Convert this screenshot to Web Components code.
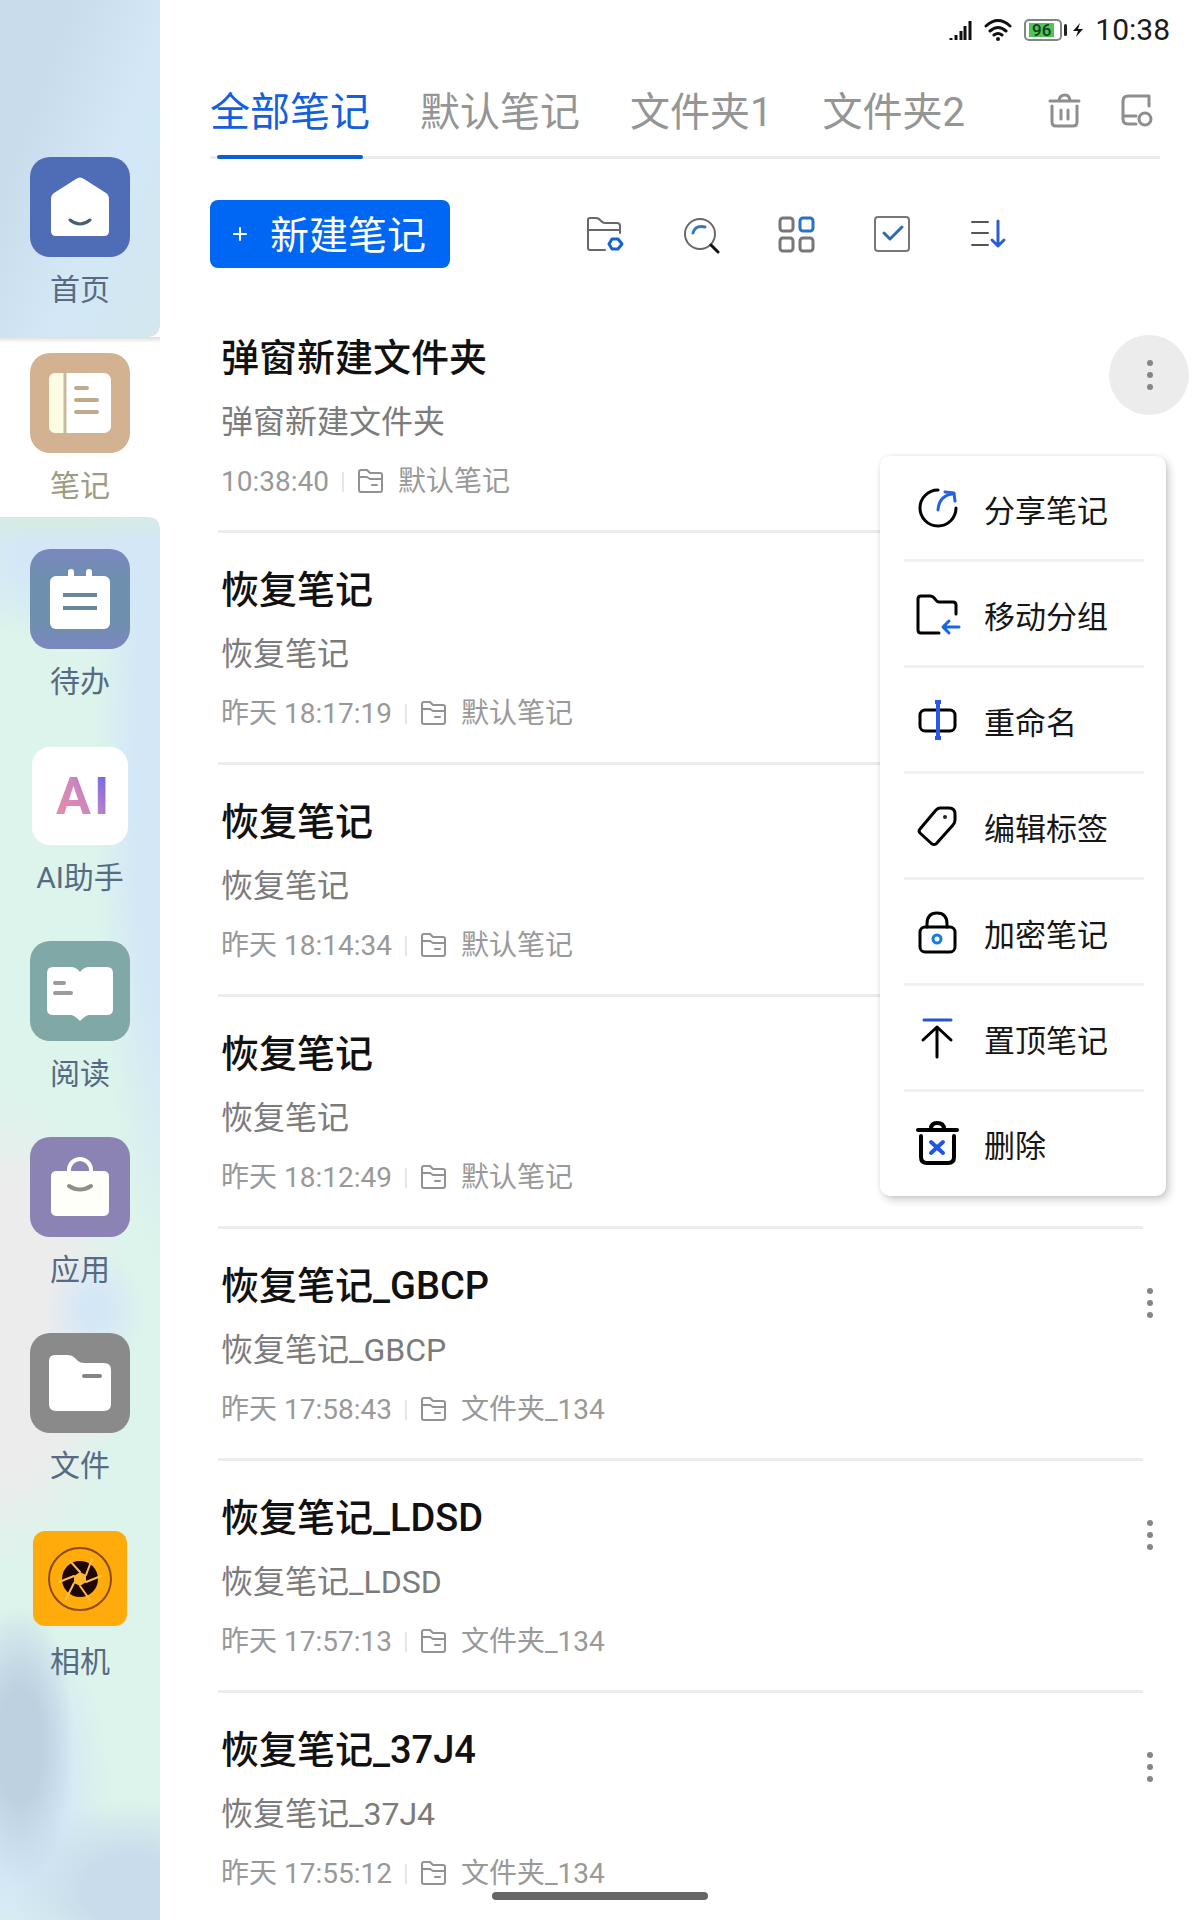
<!DOCTYPE html>
<html lang="zh-CN">
<head>
<meta charset="utf-8">
<meta name="viewport" content="width=device-width, initial-scale=1">
<title>全部笔记</title>
<style>
  html, body { margin: 0; height: 100%; }
  body { background: #fff; color: #111; font-family: Roboto, "Noto Sans CJK SC", sans-serif; overflow: hidden; }
</style>
</head>
<body>
<note-app>
  <side-bar slot="side">
    <side-item icon="home">首页</side-item>
    <side-item icon="notes" selected>笔记</side-item>
    <side-item icon="todo">待办</side-item>
    <side-item icon="ai">AI助手</side-item>
    <side-item icon="read">阅读</side-item>
    <side-item icon="apps">应用</side-item>
    <side-item icon="files">文件</side-item>
    <side-item icon="camera">相机</side-item>
  </side-bar>
  <status-bar battery="96">10:38</status-bar>
  <tab-strip>
    <tab-item active>全部笔记</tab-item>
    <tab-item>默认笔记</tab-item>
    <tab-item>文件夹1</tab-item>
    <tab-item>文件夹2</tab-item>
    <icon-button slot="tools" icon="trash" label="回收站"></icon-button>
    <icon-button slot="tools" icon="panel" label="管理"></icon-button>
  </tab-strip>
  <tool-bar>
    <new-button slot="lead">新建笔记</new-button>
    <icon-button icon="folder" label="文件夹"></icon-button>
    <icon-button icon="search" label="搜索"></icon-button>
    <icon-button icon="grid" label="视图"></icon-button>
    <icon-button icon="check" label="选择"></icon-button>
    <icon-button icon="sort" label="排序"></icon-button>
  </tool-bar>
  <note-list>
    <note-row open time="10:38:40" folder="默认笔记" summary="弹窗新建文件夹">弹窗新建文件夹
      <note-menu slot="menu">
        <menu-item icon="share">分享笔记</menu-item>
        <menu-item icon="move">移动分组</menu-item>
        <menu-item icon="rename">重命名</menu-item>
        <menu-item icon="tag">编辑标签</menu-item>
        <menu-item icon="lock">加密笔记</menu-item>
        <menu-item icon="pin">置顶笔记</menu-item>
        <menu-item icon="delete">删除</menu-item>
      </note-menu>
    </note-row>
    <note-row time="昨天 18:17:19" folder="默认笔记" summary="恢复笔记">恢复笔记</note-row>
    <note-row time="昨天 18:14:34" folder="默认笔记" summary="恢复笔记">恢复笔记</note-row>
    <note-row time="昨天 18:12:49" folder="默认笔记" summary="恢复笔记">恢复笔记</note-row>
    <note-row time="昨天 17:58:43" folder="文件夹_134" summary="恢复笔记_GBCP">恢复笔记_GBCP</note-row>
    <note-row time="昨天 17:57:13" folder="文件夹_134" summary="恢复笔记_LDSD">恢复笔记_LDSD</note-row>
    <note-row time="昨天 17:55:12" folder="文件夹_134" summary="恢复笔记_37J4">恢复笔记_37J4</note-row>
  </note-list>
</note-app>

<script>
const svg = (w, h, body) => `<svg width="${w}" height="${h}" viewBox="0 0 ${w} ${h}" fill="none" stroke-linecap="round" stroke-linejoin="round" aria-hidden="true">${body}</svg>`;
const tile = (fill, body) => svg(100, 100, `<rect width="100" height="100" rx="20" fill="${fill}"/>${body}`);

const ICONS = {
  home: tile('#4f6cb6', `<path d="M46 22Q50 19 54 22L76 36Q79 38 79 42V74Q79 79 74 79H26Q21 79 21 74V42Q21 38 24 36Z" fill="#fff"/><path d="M40 63Q50 71 60 63" stroke="#48606f" stroke-width="3"/>`),
  notes: tile('#d3b292', `<rect x="19" y="20" width="62" height="60" rx="7" fill="#fff"/><path d="M26 20H34V80H26Q19 80 19 73V27Q19 20 26 20Z" fill="#fdfde6"/><path d="M35 20V80" stroke="#c5bb9e" stroke-width="3" stroke-linecap="butt"/><path d="M46 35H57M46 47H67M46 59H67" stroke="#c0a98f" stroke-width="4"/>`),
  todo: svg(100, 100, `<defs><linearGradient id="t" x1="0" y1="0" x2="0" y2="1"><stop offset="0" stop-color="#7b87c0"/><stop offset=".3" stop-color="#6f8fae"/><stop offset=".7" stop-color="#6f8fae"/><stop offset="1" stop-color="#7b87c0"/></linearGradient></defs><rect width="100" height="100" rx="20" fill="url(#t)"/><rect x="20" y="27" width="60" height="53" rx="6" fill="#fff"/><path d="M41 23V30M59 23V30" stroke="#fff" stroke-width="6"/><path d="M33 46H67M33 59H67" stroke="#6b869b" stroke-width="4" stroke-linecap="butt"/>`),
  ai: svg(100, 100, `<defs><linearGradient id="a" gradientUnits="userSpaceOnUse" x1="26" y1="66" x2="76" y2="34"><stop offset="0" stop-color="#e58cab"/><stop offset=".5" stop-color="#cf86bd"/><stop offset="1" stop-color="#7468e6"/></linearGradient></defs><rect x="2" y="2" width="96" height="98" rx="18" fill="#fff"/><text x="26 64" y="69" font-family="Roboto" font-weight="700" font-size="52" fill="url(#a)">AI</text>`),
  read: tile('#7fa8a7', `<path d="M23 26H41Q46 26 50 31Q54 26 59 26H77Q83 26 83 32V68Q83 74 77 74H59Q56 74 50 80Q44 74 41 74H23Q17 74 17 68V32Q17 26 23 26Z" fill="#fff"/><path d="M25 42H34M25 52H41" stroke="#9b9b9b" stroke-width="4"/>`),
  apps: tile('#8b83b3', `<path d="M39 36V33A11 11 0 0 1 61 33V36" stroke="#fff" stroke-width="4"/><rect x="21" y="34" width="58" height="45" rx="5" fill="#fffffa"/><path d="M39 49Q50 56 61 49" stroke="#8f8f8a" stroke-width="4"/>`),
  files: tile('#8a8a8a', `<path d="M25 22H38Q42 22 45 25L48 28Q50 30 54 30H74Q81 30 81 37V71Q81 78 74 78H26Q19 78 19 71V28Q19 22 25 22Z" fill="#fff"/><path d="M54 43H70" stroke="#858585" stroke-width="4"/>`),
  camera: svg(100, 100, `<rect x="3" y="2" width="94" height="95" rx="12" fill="#ffab0b"/><circle cx="50" cy="50" r="31" stroke="#8c4a08" stroke-width="2"/><circle cx="50" cy="50" r="18" fill="#1d0508"/><path d="M50 43L40 32M56 46L62 30M56 53L71 47M50 57L60 71M44 54L36 70M44 47L29 53" stroke="#ffbe45" stroke-width="2"/><path d="M50 43L56 46L56 53L50 57L44 54L44 47Z" fill="#ffb82e"/>`),
  folder: svg(40, 40, `<path d="M36 19V12Q36 9 33 9H21Q19 9 17 7Q15 4 12 4H6Q4 4 4 6V34Q4 36 6 36H21M4 16H36" stroke="#686868" stroke-width="2"/><path d="M28 25H34L38 30L34 35H28L25 30Z" stroke="#1763cc" stroke-width="3"/>`),
  search: svg(40, 40, `<circle cx="20" cy="20" r="15" stroke="#686868" stroke-width="2"/><path d="M13 19Q15 11 25 13" stroke="#3279b5" stroke-width="3"/><path d="M31 31L38 38" stroke="#111" stroke-width="3"/>`),
  grid: svg(40, 40, `<g stroke="#777" stroke-width="3"><rect x="4" y="4" width="13" height="13" rx="3"/><rect x="4" y="24" width="13" height="13" rx="3"/><rect x="24" y="24" width="13" height="13" rx="3"/></g><rect x="24" y="4" width="13" height="13" rx="3" stroke="#2672c7" stroke-width="3"/>`),
  check: svg(40, 40, `<rect x="3" y="3" width="34" height="34" rx="3" stroke="#777" stroke-width="2"/><path d="M12 19L18 25L30 13" stroke="#2c6cae" stroke-width="3"/>`),
  sort: svg(40, 40, `<path d="M4 8H20M4 19H20M4 31H20" stroke="#555" stroke-width="2"/><path d="M30 7V31M24 26L30 32L36 26" stroke="#2a5fd4" stroke-width="3"/>`),
  trash: svg(40, 40, `<path d="M5 10H34M14 9Q15 4 20 4Q24 4 25 9M7 15V31Q7 35 11 35H28Q32 35 32 31V15M16 19V28M23 19V28" stroke="#8e8e8e" stroke-width="3"/>`),
  panel: svg(40, 40, `<path d="M32 15V5H11Q6 5 6 10V28Q6 33 11 33H19M7 25H19" stroke="#8e8e8e" stroke-width="3"/><circle cx="28" cy="28" r="6" stroke="#8e8e8e" stroke-width="3"/>`),
  small: svg(28, 28, `<path d="M2 22V4Q2 2 4 2H10L13 5H23Q25 5 25 7V22Q25 24 23 24H4Q2 24 2 22M2 9H10L13 11H25M15 17H20" stroke="#929292" stroke-width="2"/>`),
  share: svg(48, 48, `<path d="M25 6A18 18 0 1 0 43 24" stroke="#000" stroke-width="3"/><path d="M25 26Q26 12 39 10M32 8L41 9L42 17" stroke="#265fe2" stroke-width="3"/>`),
  move: svg(48, 48, `<path d="M43 24V15Q43 12 40 12H26Q24 12 22 9Q20 6 17 6H8Q5 6 5 9V40Q5 43 8 43H26" stroke="#000" stroke-width="3"/><path d="M46 37H31M36 31L30 37L36 43" stroke="#1467e8" stroke-width="3"/>`),
  rename: svg(48, 48, `<rect x="7" y="14" width="35" height="21" rx="5" stroke="#000" stroke-width="3"/><path d="M25 6V42M22 6H28M22 42H28" stroke="#2857ea" stroke-width="4" stroke-linecap="butt"/>`),
  tag: svg(48, 48, `<path d="M27 6H36Q42 6 42 12V18Q42 21 40 23L23 42Q21 43 19 42L7 31Q5 29 7 27L23 8Q25 6 27 6Z" stroke="#000" stroke-width="3"/><circle cx="32" cy="15" r="2" fill="#222"/>`),
  lock: svg(48, 48, `<path d="M14 19V16Q14 5 24 5Q34 5 34 16V19" stroke="#000" stroke-width="3"/><rect x="7" y="19" width="35" height="25" rx="5" stroke="#000" stroke-width="3"/><circle cx="24" cy="31" r="4" stroke="#157be6" stroke-width="3"/>`),
  pin: svg(48, 48, `<path d="M11 6H38" stroke="#2359c4" stroke-width="3"/><path d="M24 43V13M10 26L24 13L38 26" stroke="#000" stroke-width="3"/>`),
  delete: svg(48, 48, `<path d="M5 11H44M18 10Q18 4 24 4Q31 4 31 10M8 17V38Q8 44 14 44H35Q41 44 41 38V17" stroke="#000" stroke-width="4"/><path d="M18 23L30 34M30 23L18 34" stroke="#2156e4" stroke-width="4"/>`)
};

const BASE = `:host{display:block;box-sizing:border-box}*{box-sizing:border-box}svg{display:block}
button{border:0;padding:0;margin:0;background:none;font:inherit;color:inherit;cursor:pointer}`;

function define(name, render) {
  customElements.define(name, class extends HTMLElement {
    connectedCallback() {
      if (this.shadowRoot) return;
      const [css, html] = render(this);
      this.attachShadow({ mode: 'open' }).innerHTML = `<style>${BASE}${css}</style>${html}`;
    }
  });
}

define('note-app', () => [`
  :host{display:flex;height:100vh;overflow:hidden}
  aside{flex:0 0 160px}
  main{flex:1;min-width:0;display:flex;flex-direction:column}
  i{position:fixed;bottom:20px;left:50%;width:216px;height:8px;margin-left:-108px;border-radius:4px;background:#666;box-shadow:0 0 0 3px #fff}
`, `<aside><slot name="side"></slot></aside><main><slot></slot></main><i></i>`]);

define('side-bar', () => [`
  :host{height:100%;padding-top:141px;background:
    linear-gradient(110deg,#c9dcec 0 25%,#d3e7f7 60%,#d2e7ee) 0 0/160px 340px no-repeat,
    radial-gradient(55px 140px at 20px 1745px,#bed1e0 40%,#bed1e000),
    radial-gradient(120px 90px at 130px 1890px,#c9dcec 40%,#c9dcec00),
    radial-gradient(100px 180px at 10px 1790px,#d3e7f7 50%,#d3e7f700),
    radial-gradient(50px 60px at 95px 1310px,#d3e7f7 20%,#d3e7f700),
    radial-gradient(130px 240px at 0 1330px,#ececec 60%,#ececec00),
    radial-gradient(200px 30px at 60px 515px,#d6ebe4 30%,#d6ebe400),
    radial-gradient(180px 100px at 110px 550px,#d3e7f7 50%,#d3e7f700),
    radial-gradient(80px 500px at 175px 780px,#d3e7f7 50%,#d3e7f700),
    #dcf4eb}
  nav{display:flex;flex-direction:column;gap:16px}
`, `<nav><slot></slot></nav>`]);

define('side-item', el => {
  const on = el.hasAttribute('selected');
  return [`
  :host{position:relative;height:180px;padding-top:16px;${on ? 'background:linear-gradient(#dcdcdc,#fff 6px)' : ''}}
  a{display:flex;flex-direction:column;align-items:center;gap:13px;text-decoration:none;font-size:30px;line-height:40px;color:${on ? '#9d9c83' : '#566b83'}}
  ${on ? `:host::before,:host::after{content:"";position:absolute;right:0;width:10px;height:10px}
  :host::before{top:-10px;background:radial-gradient(circle at 0 0,transparent 9px,#fff 10px)}
  :host::after{bottom:-10px;background:radial-gradient(circle at 0 100%,transparent 9px,#fff 10px)}` : ''}
`, `<a href="#${el.getAttribute('icon')}"${on ? ' aria-current="page"' : ''}>${ICONS[el.getAttribute('icon')]}<span><slot></slot></span></a>`];
});

define('status-bar', el => [`
  :host{display:flex;justify-content:flex-end;align-items:center;height:60px;padding-right:30px;font-size:30px;line-height:36px;color:#1c1c1c}
  .wifi{margin:0 12px}
  .cell{width:38px;height:22px;padding:2px 6px 2px 3px;border:2px solid #7d8a7d;border-radius:5px}
  .cell b{display:block;background:#50c458;color:#123f18;font-size:17px;font-weight:500;line-height:14px;text-align:center}
  .cap{width:3px;height:12px;margin-left:2px;background:#222;border-radius:2px}
  .bolt{margin:0 11px 0 5px}
`, `${svg(24, 24, '<path d="M3 20V22M8 17V22M13 13V22M17 8V22M22 3V22" stroke="#111" stroke-width="3" stroke-linecap="butt"/>')}
  <span class="wifi">${svg(28, 24, '<path d="M2 8Q14 -3 26 8M6 13Q14 6 22 13M10 17Q14 14 18 17" stroke="#111" stroke-width="3"/><circle cx="14" cy="21" r="2" fill="#111"/>')}</span>
  <div class="cell"><b>${el.getAttribute('battery')}</b></div><div class="cap"></div>
  <span class="bolt">${svg(12, 14, '<path d="M8 0L1 8H6L4 14L11 6H6Z" fill="#111"/>')}</span><time><slot></slot></time>`]);

define('tab-strip', () => [`
  :host{padding:0 40px 0 50px}
  .row{display:flex;height:99px;border-bottom:3px solid #ececec}
  nav{display:flex;gap:50px;flex:1}
  .tools{display:flex;gap:32px;padding-top:31px;padding-right:3px}
`, `<div class="row"><nav><slot></slot></nav><div class="tools"><slot name="tools"></slot></div></div>`]);

define('tab-item', el => {
  const on = el.hasAttribute('active');
  return [`
  :host{position:relative;height:99px;color:${on ? '#1260e0' : '#959595'}}
  button{height:99px;padding-top:6px;font-size:40px;line-height:48px;white-space:nowrap}
  ${on ? ':host::after{content:"";position:absolute;left:7px;right:7px;bottom:0;height:4px;border-radius:2px;background:#0c5ed8}' : ''}
`, `<button${on ? ' aria-current="true"' : ''}><slot></slot></button>`];
});

define('icon-button', el => [`button{display:block}`,
  `<button aria-label="${el.getAttribute('label')}">${ICONS[el.getAttribute('icon')]}</button>`]);

define('tool-bar', () => [`
  :host{display:flex;align-items:center;padding:41px 40px 30px 50px}
  .tools{display:flex;gap:56px;margin-left:134px}
`, `<slot name="lead"></slot><div class="tools"><slot></slot></div>`]);

define('new-button', () => [`
  button{display:flex;align-items:center;gap:22px;width:240px;height:68px;padding-left:22px;border-radius:8px;background:#0067f5;color:#fff;font-size:39px;line-height:48px;white-space:nowrap}
  span{padding-top:4px}
`, `<button>${svg(16, 16, '<path d="M8 2V14M2 8H14" stroke="#fff" stroke-width="2"/>')}<span><slot></slot></span></button>`]);

define('note-list', () => [`:host{flex:1;min-height:0;overflow:hidden;padding:0 11px 0 58px}`, `<slot></slot>`]);

define('note-row', el => {
  const a = n => el.getAttribute(n), open = el.hasAttribute('open');
  return [`
  :host{position:relative;height:232px}
  hr{margin:0 46px 0 0;border:0;height:3px;background:#ececec}
  :host(:first-child) hr{background:none}
  article{display:flex;height:229px}
  .body{flex:1;padding:33px 0 0 3px;display:flex;flex-direction:column}
  h2{margin:0 0 20px;font-size:38px;line-height:48px;font-weight:500;color:#111;white-space:nowrap}
  p{margin:0 0 22px;font-size:32px;line-height:40px;color:#7b7b7b}
  .meta{display:flex;align-items:center;font-size:28px;line-height:36px;color:#999}
  .bar{width:2px;height:20px;margin:0 13px;background:#e6e6e6}
  .meta span{margin-left:13px}
  button{width:80px;height:80px;margin-top:34px;border-radius:50%;display:flex;align-items:center;justify-content:center;background:${open ? '#ececec' : 'none'}}
  .menu{position:absolute;z-index:2;top:158px;right:23px}
`, `<hr><article><div class="body"><h2><slot></slot></h2><p>${a('summary')}</p><div class="meta"><time>${a('time')}</time><i class="bar"></i>${ICONS.small}<span>${a('folder')}</span></div></div>
  <button aria-label="更多"${open ? ' aria-expanded="true"' : ''}>${svg(8, 32, '<g fill="#858585"><circle cx="5" cy="4" r="3"/><circle cx="5" cy="16" r="3"/><circle cx="5" cy="28" r="3"/></g>')}</button></article>
  ${open ? '<div class="menu"><slot name="menu"></slot></div>' : ''}`];
});

define('note-menu', () => [`
  :host{width:286px;border-radius:10px;background:#fff;box-shadow:3px 4px 8px #0003,0 0 4px #0001}
`, `<div role="menu"><slot></slot></div>`]);

define('menu-item', el => [`
  :host{padding:0 22px 0 24px}
  button{display:flex;align-items:center;gap:22px;width:100%;height:106px;padding-left:9px;border-bottom:3px solid #f1f1f1;font-size:31px;line-height:40px;color:#161616;white-space:nowrap}
  :host(:last-child) button{height:104px;border-color:transparent}
  span{padding:8px 0 0 1px}
`, `<button role="menuitem">${ICONS[el.getAttribute('icon')]}<span><slot></slot></span></button>`]);
</script>
</body>
</html>
